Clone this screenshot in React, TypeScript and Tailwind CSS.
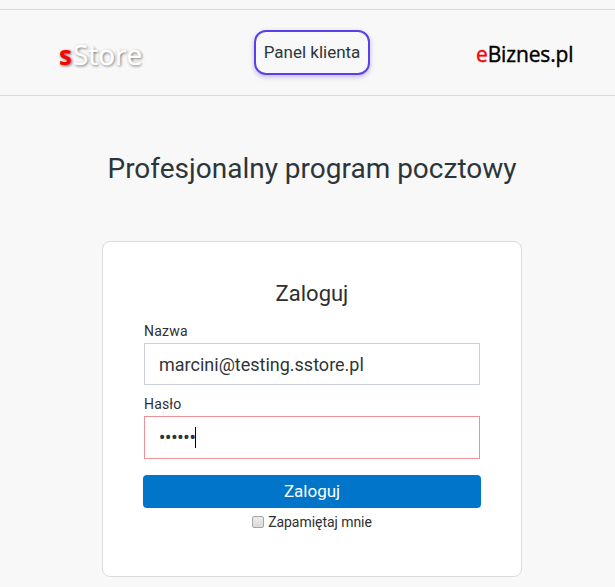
import { useState } from 'react'

export default function App() {
  const [email, setEmail] = useState('marcini@testing.sstore.pl')
  const [remember, setRemember] = useState(false)

  return (
    <div className="h-[587px] w-full overflow-hidden bg-[#f8f8f8] pt-[9px] font-['Roboto',sans-serif] text-[#2c363a]">
      <header className="flex h-[87px] justify-between border-y border-[#dcdcdc] pl-[59px] pr-[41px]">
        <div className="w-[86px] pt-[25px] font-['Open_Sans',sans-serif] text-[28px] leading-[38px] font-medium whitespace-nowrap text-white [text-shadow:1px_1px_3px_rgba(0,0,0,0.6)] [-webkit-text-stroke:0.4px_white]">
          <span className="mr-px text-[26px] font-bold text-[#f00] [-webkit-text-stroke:0]">s</span>Store
        </div>
        <button className="mt-5 ml-[3px] h-[45px] w-[116px] rounded-xl border-2 border-[#5b3fe8] text-[17px] leading-none whitespace-nowrap shadow-[0_2px_5px_rgba(91,63,232,0.35)]">
          Panel klienta
        </button>
        <div className="w-[98px] pt-[29px] font-['Open_Sans',sans-serif] text-[21px] leading-[30px] tracking-[-0.15px] whitespace-nowrap text-black [-webkit-text-stroke:0.4px_currentColor]">
          <span className="text-[#f00]">e</span>Biznes.pl
        </div>
      </header>

      <main className="ml-[9px] flex flex-col items-center">
        <h1 className="mt-[53px] text-[28px] leading-[40px] whitespace-nowrap">Profesjonalny program pocztowy</h1>

        <form className="mt-[52px] h-[336px] w-[420px] rounded-lg border border-[#dcdcdc] bg-white px-10 pt-[37px] text-[#2f2f2f]">
          <h2 className="text-center text-[22px] leading-[30px]">Zaloguj</h2>

          <div className="ml-px w-[336px]">
            <label className="mt-[12px] block text-[14px] leading-[20px] tracking-[0.25px]">Nazwa</label>
            <input
              type="text"
              value={email}
              onChange={e => setEmail(e.target.value)}
              className="mt-[2px] block h-[42px] w-full border border-[#cbd0d8] px-[14px] text-[18px] text-[#2c363a]"
            />
            <label className="mt-[9px] block text-[14px] leading-[20px] tracking-[0.15px]">Hasło</label>
            <div className="mt-[2px] flex h-[43px] items-center border border-[#ef8f98] px-[14px] text-[18px] text-[#2c363a]">
              <span className="w-9 font-medium tracking-[-0.2px]">••••••</span>
              <span className="h-[21px] w-px bg-black" />
            </div>
          </div>

          <button type="button" className="mt-[16px] block h-[33px] w-[338px] rounded bg-[#0075c9] text-[17px] leading-none text-white">
            Zaloguj
          </button>
          <label className="mt-1 flex items-center justify-center gap-1 text-[14px] leading-[20px] tracking-[-0.05px]">
            <input
              type="checkbox"
              checked={remember}
              onChange={e => setRemember(e.target.checked)}
              className="size-3 appearance-none rounded-[2px] border border-[#a5a5a5] bg-linear-to-b from-[#eee] to-[#d9d9d9]"
            />
            Zapamiętaj mnie
          </label>
        </form>
      </main>
    </div>
  )
}
